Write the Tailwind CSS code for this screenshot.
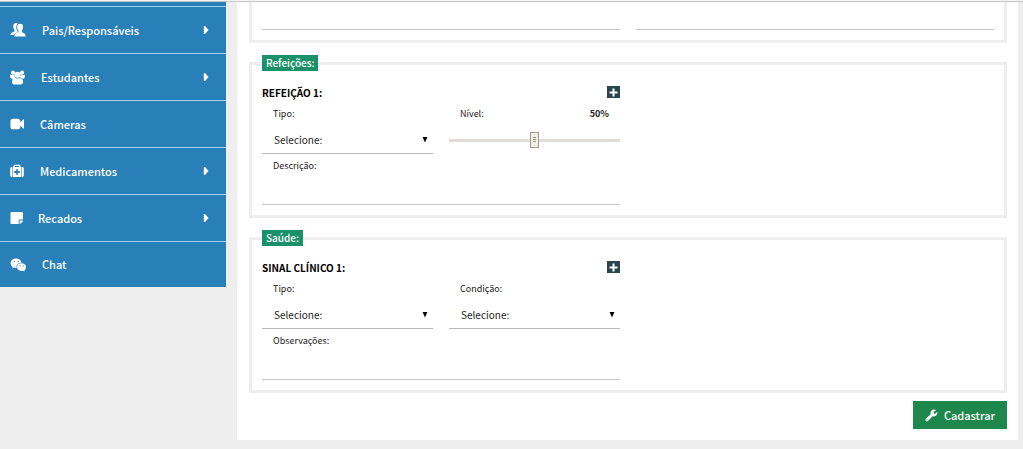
<!DOCTYPE html>
<html lang="pt-BR">
<head>
<meta charset="utf-8">
<meta name="viewport" content="width=device-width, initial-scale=1">
<title>Cadastro</title>
<script src="https://cdn.jsdelivr.net/npm/@tailwindcss/browser@4"></script>
</head>
<body class="min-h-screen bg-[#eeeeee] font-['Noto_Sans_CJK_SC','Open_Sans',sans-serif] text-[10px] text-[#222222]">
<header class="h-[2px] border-b border-[#c4c8c8] bg-[#f4f4f4]"></header>
<div class="flex items-start pr-[5px]">
  <nav class="w-[226px] shrink-0 bg-[#2980b9] pt-1 text-[11px] font-medium text-white" aria-label="Menu principal">
    <ul>
      <li class="border-t border-[#9fd3f5]">
        <a href="#pais" class="flex h-[46px] items-center gap-4 pr-[17px] pl-[10px]">
          <svg class="h-4 w-4" viewBox="0 0 16 16" fill="currentColor"><path d="M6.200 1C4 1 3.100 2.500 3.300 4.700c.1 1.500.5 2.700 1.200 3.500.1 1-.3 1.500-1.200 1.900C1.700 10.800.6 11.300.4 13h3.700c.5-1.300 1.600-1.900 3-2.400.5-.2.700-.5.500-1.200C6.900 8.500 6.300 7 6.300 5.300c0-1.800.6-3 1.900-3.700C7.700 1.200 7 1 6.200 1z"/><path d="M10.300 1.800c-2.300 0-3.200 1.400-3.100 3.500.1 1.500.6 2.700 1.300 3.500.1 1.100-.3 1.500-1.200 1.900-1.700.7-2.700 1.300-2.900 3.800h11.400c-.2-2.500-1.200-3-2.900-3.800-.8-.4-1.200-.9-1.100-1.900.7-.8 1.100-2 1.200-3.500.1-2.100-.5-3.500-2.700-3.500z"/></svg>
          <span class="flex-1">Pais/Responsáveis</span>
          <svg class="h-2 w-[6px]" viewBox="0 0 6 8" fill="currentColor"><path d="M.8 0H2l3.500 4L2 8H.8z"/></svg>
        </a>
      </li>
      <li class="border-t border-[#9fd3f5]">
        <a href="#estudantes" class="flex h-[46px] items-center gap-4 pr-[17px] pl-[10px]">
          <svg class="h-[15px] w-[15px]" viewBox="0 0 15 15" fill="currentColor"><circle cx="3" cy="2.700" r="2.100"/><circle cx="12" cy="2.700" r="2.100"/><circle cx="7.500" cy="4.800" r="3"/><path d="M.2 4.400c.8.800 2.800 1 4 .2 0 1.200.5 2.200 1.200 2.900L4.500 8.400H1.500C.6 8.400.1 7.600.1 6.600zM14.800 4.400c-.8.800-2.800 1-4 .2 0 1.200-.5 2.200-1.200 2.900l.9.900h3c.9 0 1.400-.8 1.400-1.800zM4.500 7.500c1.700 1.300 4.300 1.300 6 0 1.700.1 2.500 2 2.500 4.500 0 1.600-.7 2.500-2.100 2.500H4.100C2.700 14.500 2 13.600 2 12c0-2.500.8-4.400 2.500-4.500z"/></svg>
          <span class="flex-1">Estudantes</span>
          <svg class="h-2 w-[6px]" viewBox="0 0 6 8" fill="currentColor"><path d="M.8 0H2l3.500 4L2 8H.8z"/></svg>
        </a>
      </li>
      <li class="border-t border-[#9fd3f5]">
        <a href="#cameras" class="flex h-[46px] items-center gap-4 pr-[17px] pl-[10px]">
          <svg class="h-[14px] w-[14px]" viewBox="0 0 14 14" fill="currentColor"><path d="M2.800 1.800h5C9.300 1.800 10.200 2.700 10.200 4.100v1.300l3.100-3c.4-.3.8-.1.800.4v8.400c0 .5-.4.700-.8.400l-3.100-3v1.300c0 1.400-.9 2.300-2.400 2.300h-5C1.400 12.200.5 11.300.5 9.900V4.100C.5 2.700 1.400 1.800 2.800 1.800z"/></svg>
          <span class="flex-1">Câmeras</span>
        </a>
      </li>
      <li class="border-t border-[#9fd3f5]">
        <a href="#medicamentos" class="flex h-[46px] items-center gap-4 pr-[17px] pl-[10px]">
          <svg class="h-[14px] w-[14px]" viewBox="0 0 14 14" fill="currentColor"><path fill-rule="evenodd" d="M3.500 3V1.800C3.500 1.100 4 .7 4.600.7h4.800c.6 0 1.100.4 1.100 1.100V3h.8v10H2.700V3zm1.300 0h4.400V2H4.800zM6.200 5v2h-2v2h2v2h1.600V9h2V7h-2V5z"/><path d="M2.200 3v10h-.5C.8 13 .2 12.400.2 11.600V4.400C.2 3.600.8 3 1.700 3zM11.800 3v10h.5c.9 0 1.500-.6 1.500-1.400V4.400c0-.8-.6-1.400-1.500-1.400z"/></svg>
          <span class="flex-1">Medicamentos</span>
          <svg class="h-2 w-[6px]" viewBox="0 0 6 8" fill="currentColor"><path d="M.8 0H2l3.500 4L2 8H.8z"/></svg>
        </a>
      </li>
      <li class="border-t border-[#9fd3f5]">
        <a href="#recados" class="flex h-[46px] items-center gap-4 pr-[17px] pl-[10px]">
          <svg class="h-[14px] w-[12px] overflow-visible" viewBox="0 0 12 14" fill="currentColor"><path d="M1.300 1h10.900c.4 0 .8.400.8.800V8.600H9.600c-.5 0-.9.400-.9.900V13H1.300c-.4 0-.8-.4-.8-.8V1.800c0-.4.400-.8.800-.8zM9.600 9.600H13c-.1.500-.3 1-.6 1.300l-1.400 1.400c-.3.300-.8.600-1.400.7z"/></svg>
          <span class="flex-1">Recados</span>
          <svg class="h-2 w-[6px]" viewBox="0 0 6 8" fill="currentColor"><path d="M.8 0H2l3.500 4L2 8H.8z"/></svg>
        </a>
      </li>
      <li class="border-t border-[#9fd3f5]">
        <a href="#chat" class="flex h-[45px] items-center gap-4 pr-[17px] pl-[10px]">
          <svg class="h-4 w-4" viewBox="0 0 16 16" fill="currentColor"><path fill-rule="evenodd" d="M6.200 1.500C3.100 1.500.6 3.600.6 6.200c0 1.500.8 2.800 2.200 3.700l-.5 1.700 1.900-1c.7.200 1.300.3 2 .3h.5c-.9-3 1.500-5.300 4.900-5.200C11.200 3.300 9 1.500 6.200 1.500zM4.300 3.900a.7.700 0 1 1 0 1.400.7.700 0 0 1 0-1.400zm3.900 0a.7.700 0 1 1 0 1.400.7.700 0 0 1 0-1.400z"/><path fill-rule="evenodd" d="M11.500 6.300c-2.600 0-4.500 1.700-4.500 3.800s1.900 3.900 4.500 3.900c.6 0 1.200-.2 1.700-.3l1.600.9-.4-1.500c1-.7 1.700-1.800 1.700-3 0-2.100-2.100-3.800-4.600-3.800zM10 8.300a.6.600 0 1 1 0 1.200.6.600 0 0 1 0-1.200zm3 0a.6.600 0 1 1 0 1.200.6.600 0 0 1 0-1.200z"/></svg>
          <span class="flex-1">Chat</span>
        </a>
      </li>
    </ul>
  </nav>

  <main class="ml-[11px] min-w-0 flex-1 bg-white pr-[11px] pb-[11px] pl-3">
    <form>
      <fieldset class="grid grid-cols-2 gap-4 border-3 border-t-0 border-[#eeeeee] px-[10px] pb-[10px]">
        <input type="text" aria-label="Campo 1" class="h-7 w-full border-b border-[#c6c6c6] px-3 outline-none">
        <input type="text" aria-label="Campo 2" class="h-7 w-full border-b border-[#c6c6c6] px-3 outline-none">
      </fieldset>

      <fieldset class="mt-3 border-3 border-[#eeeeee] px-[10px] pb-[10px]">
        <legend class="h-4 bg-[#1a9169] px-1 text-[10px] leading-4 font-medium text-white">Refeições:</legend>
        <div class="grid grid-cols-2 gap-4 pt-3">
          <div>
            <div class="flex h-[18px] items-center justify-between">
              <h2 class="text-[10px] font-bold text-black">REFEIÇÃO 1:</h2>
              <button type="button" aria-label="Adicionar refeição" class="flex h-3 w-[13px] items-center justify-center bg-[#2a464f] text-white">
                <svg class="h-[9px] w-[9px]" viewBox="0 0 9 9" fill="currentColor"><path d="M3.500.5h2v3h3v2h-3v3h-2v-3h-3v-2h3z"/></svg>
              </button>
            </div>
            <div class="grid grid-cols-2 gap-x-4">
              <div>
                <label for="tipo-refeicao" class="flex h-[26px] items-center pl-[11px] text-[9px]">Tipo:</label>
                <div class="relative">
                  <select id="tipo-refeicao" class="h-[27px] w-full appearance-none border-b border-[#b8b8b8] px-3 pb-[2px] text-[10px] outline-none"><option>Selecione:</option></select>
                  <svg class="pointer-events-none absolute top-[10px] right-[5px] h-[6px] w-[6px]" viewBox="0 0 6 6" fill="#000"><path d="M.6 0h4.800L3 5.600z"/></svg>
                </div>
              </div>
              <div>
                <div class="flex h-[26px] items-center justify-between pr-[11px] pl-[11px] text-[9px]">
                  <label for="nivel">Nível:</label>
                  <output for="nivel" class="font-bold">50%</output>
                </div>
                <div class="flex h-[26px] items-center">
                  <input id="nivel" type="range" min="0" max="100" value="50" class="h-[3px] w-full appearance-none bg-[#e0dcd6] outline-none [&::-webkit-slider-thumb]:h-4 [&::-webkit-slider-thumb]:w-[9px] [&::-webkit-slider-thumb]:appearance-none [&::-webkit-slider-thumb]:border [&::-webkit-slider-thumb]:border-[#9d9890] [&::-webkit-slider-thumb]:bg-[#f0ede6] [&::-webkit-slider-thumb]:bg-[linear-gradient(#99958d_1px,#f0ede6_1px)] [&::-webkit-slider-thumb]:bg-[length:3px_2px] [&::-webkit-slider-thumb]:bg-no-repeat [&::-webkit-slider-thumb]:bg-center [&::-webkit-slider-thumb]:bg-repeat-y [&::-webkit-slider-thumb]:bg-origin-content [&::-webkit-slider-thumb]:shadow-[inset_0_0_0_1px_#f0ede6,inset_0_4px_0_#f0ede6,inset_0_-4px_0_#f0ede6]">
                </div>
              </div>
            </div>
            <label for="descricao" class="flex h-6 items-center pl-[11px] text-[9px]">Descrição:</label>
            <input id="descricao" type="text" class="block h-[27px] w-full border-b border-[#c6c6c6] px-3 outline-none">
          </div>
        </div>
      </fieldset>

      <fieldset class="mt-3 border-3 border-[#eeeeee] px-[10px] pb-[10px]">
        <legend class="h-4 bg-[#1a9169] px-1 text-[10px] leading-4 font-medium text-white">Saúde:</legend>
        <div class="grid grid-cols-2 gap-4 pt-3">
          <div>
            <div class="flex h-[18px] items-center justify-between">
              <h2 class="text-[10px] font-bold text-black">SINAL CLÍNICO 1:</h2>
              <button type="button" aria-label="Adicionar sinal clínico" class="flex h-3 w-[13px] items-center justify-center bg-[#2a464f] text-white">
                <svg class="h-[9px] w-[9px]" viewBox="0 0 9 9" fill="currentColor"><path d="M3.500.5h2v3h3v2h-3v3h-2v-3h-3v-2h3z"/></svg>
              </button>
            </div>
            <div class="grid grid-cols-2 gap-x-4">
              <div>
                <label for="tipo-sinal" class="flex h-[26px] items-center pl-[11px] text-[9px]">Tipo:</label>
                <div class="relative">
                  <select id="tipo-sinal" class="h-[27px] w-full appearance-none border-b border-[#b8b8b8] px-3 pb-[2px] text-[10px] outline-none"><option>Selecione:</option></select>
                  <svg class="pointer-events-none absolute top-[10px] right-[5px] h-[6px] w-[6px]" viewBox="0 0 6 6" fill="#000"><path d="M.6 0h4.800L3 5.600z"/></svg>
                </div>
              </div>
              <div>
                <label for="condicao" class="flex h-[26px] items-center pl-[11px] text-[9px]">Condição:</label>
                <div class="relative">
                  <select id="condicao" class="h-[27px] w-full appearance-none border-b border-[#b8b8b8] px-3 pb-[2px] text-[10px] outline-none"><option>Selecione:</option></select>
                  <svg class="pointer-events-none absolute top-[10px] right-[5px] h-[6px] w-[6px]" viewBox="0 0 6 6" fill="#000"><path d="M.6 0h4.800L3 5.600z"/></svg>
                </div>
              </div>
            </div>
            <label for="observacoes" class="flex h-6 items-center pl-[11px] text-[9px]">Observações:</label>
            <input id="observacoes" type="text" class="block h-[27px] w-full border-b border-[#c6c6c6] px-3 outline-none">
          </div>
        </div>
      </fieldset>

      <div class="mt-2 flex justify-end">
        <button type="submit" class="flex h-7 items-center gap-[6px] bg-[#1e874b] px-3 text-[11px] font-medium text-white">
          <svg class="h-[13px] w-[13px]" viewBox="0 0 14 14" fill="currentColor"><path fill-rule="evenodd" d="M12.900 3.200c.2-.1.500 0 .5.300 0 2.500-1.500 4.500-4 4.500-.5 0-.9-.1-1.300-.2l-5 5c-.7.700-1.700.6-2.200 0-.6-.6-.6-1.500 0-2.200l5.200-5C5.500 2.700 7.300.6 9.800.6c.6 0 1.300.2 1.800.5.200.2.200.4 0 .6L9.300 3v1.700l1.400.8zM2 11.300a.6.600 0 1 0 0 1.200.6.600 0 0 0 0-1.200z"/></svg>
          Cadastrar
        </button>
      </div>
    </form>
  </main>
</div>
</body>
</html>
